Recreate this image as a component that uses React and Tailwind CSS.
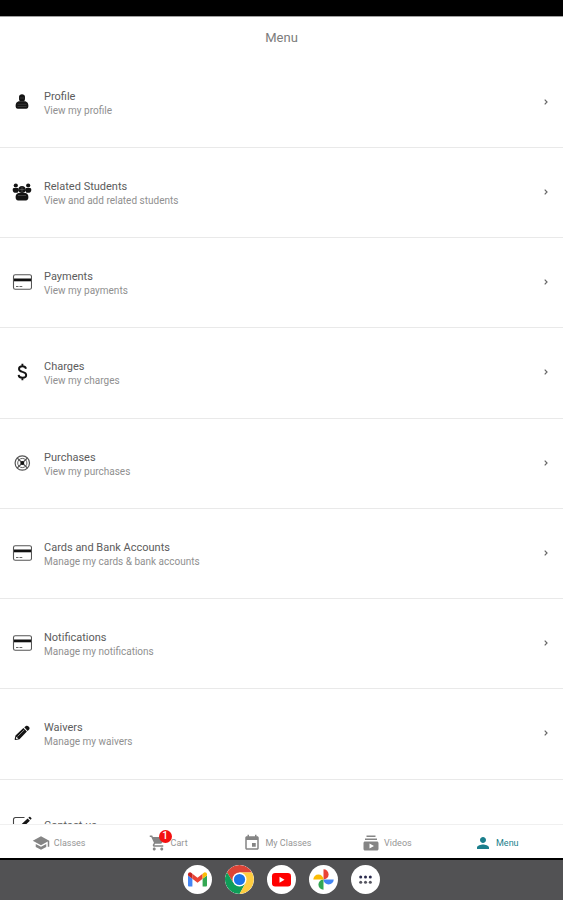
import React from "react";

function PersonIcon() {
  return (
    <svg viewBox="0 0 20 20" className="size-5" aria-hidden="true">
      <path fill="#141414" d="M7 5C7 3.400 8.300 2.300 10 2.300s3 1.100 3 2.700v2c0 1-.4 1.800-1 2.400H8C7.400 8.800 7 8 7 7z" />
      <path fill="#141414" d="M6.600 9.300h6.800c1.900.6 3 2.200 3 4.500 0 1.900-.7 2.900-2.200 2.900H5.800c-1.500 0-2.200-1-2.200-2.900 0-2.300 1.100-3.900 3-4.500z" />
      <path stroke="#666" strokeWidth=".4" d="M5.500 12.300h9M5.500 14.500h9M7.500 6h5" />
    </svg>
  );
}

function GroupIcon() {
  return (
    <svg viewBox="0 0 20 20" className="size-5" aria-hidden="true" fill="#141414">
      <circle cx="3.800" cy="3.500" r="2.100" />
      <circle cx="16.200" cy="3.500" r="2.100" />
      <path d="M1.800 6h4.400l.8 2.500-1.500 2.300H2.800C1.500 10.600.7 9.300.7 7.700.7 6.700 1.100 6.200 1.800 6zM18.200 6h-4.400l-.8 2.500 1.500 2.300h2.700c1.300-.2 2.100-1.500 2.100-3.100 0-1-.4-1.500-1.100-1.700z" />
      <circle cx="10" cy="7.500" r="3.600" />
      <path d="M6.500 11h7c1.700.3 2.900 1.800 2.900 4 0 2.300-.9 3.500-2.500 3.500H6.100c-1.600 0-2.500-1.200-2.500-3.500 0-2.200 1.200-3.700 2.900-4z" />
      <path stroke="#888" strokeWidth=".4" d="M7.500 7.500h5M10 5v5M6 13.500h8" />
    </svg>
  );
}

function CardIcon() {
  return (
    <svg viewBox="0 0 20 20" className="size-5" aria-hidden="true">
      <rect x="1.500" y="2.800" width="18" height="14.400" rx="1.800" fill="#fff" stroke="#555" strokeWidth="1.100" />
      <path fill="#111" d="M2 6.500h17v2.800H2z" />
      <path stroke="#666" strokeWidth="1" d="M4 14.500h2.500M7.500 14.500h2.800" />
    </svg>
  );
}

function DollarIcon() {
  return (
    <svg viewBox="0 0 20 20" className="size-5" aria-hidden="true">
      <path fill="none" stroke="#141414" strokeWidth="1.900" d="M14 6.700c-.4-1.700-1.700-2.500-3.600-2.500S7 5.200 7 6.900c0 1.900 1.700 2.400 3.500 2.900 2 .5 3.700 1.200 3.700 3.200 0 1.800-1.500 2.800-3.700 2.800s-3.700-1-3.900-3M10.400 1.800v2.600M10.400 15.600v2.700" />
    </svg>
  );
}

function WheelIcon() {
  return (
    <svg viewBox="0 0 20 20" className="size-5" aria-hidden="true" fill="none" stroke="#555">
      <circle cx="10.300" cy="10" r="7.200" strokeWidth="1.200" />
      <circle cx="10.300" cy="10" r="4.600" strokeWidth=".9" />
      <path strokeWidth="1.100" d="M5.200 5l10.200 10M15.400 5L5.200 15" />
      <circle cx="10.300" cy="10" r="2" fill="#111" stroke="none" />
    </svg>
  );
}

function PencilIcon() {
  return (
    <svg viewBox="0 0 20 20" className="size-5" aria-hidden="true" fill="#141414">
      <path d="M12.300 4.200l1.600-1.200c.8-.5 1.800-.4 2.400.2l.9 1c.6.700.5 1.500-.1 2.200l-1.500 1.500zM11.400 5l3.500 3.600-7.400 7.600-4.200.9-.7-.7.9-4z" />
      <path fill="none" stroke="#bbb" strokeWidth=".7" d="M5.500 13.500l6.800-6.700" />
      <path fill="#fff" d="M4.300 13.700l2 1.900-1.800.3-.6-.5z" />
    </svg>
  );
}

function ComposeIcon() {
  return (
    <svg viewBox="0 0 20 20" className="size-5" aria-hidden="true">
      <path fill="none" stroke="#444" strokeWidth="1.100" d="M12.500 3.500H3.600C2.200 3.500 1.500 4.200 1.500 5.600v8.800c0 1.400.7 2.100 2.100 2.100h9.800c1.400 0 2.100-.7 2.100-2.100v-4" />
      <path fill="#141414" d="M15.600 4.500l2.300 2.200-6.300 6-3.300.9 1-3.200zM16.300 3.800l1-.9c.4-.3.700-.3 1 0l1 1c.3.3.3.700 0 1l-.8.900z" />
    </svg>
  );
}

function ClassesIcon() {
  return (
    <svg viewBox="0 0 24 24" className="size-[18px]" aria-hidden="true" fill="currentColor">
      <path d="M5 13.180v4L12 21l7-3.820v-4L12 17l-7-3.820zM12 3L1 9l11 6 9-4.910V17h2V9L12 3z" />
    </svg>
  );
}

function CartIcon() {
  return (
    <svg viewBox="0 0 24 24" className="size-[18px]" aria-hidden="true" fill="currentColor">
      <path d="M7 18c-1.100 0-1.990.9-1.990 2S5.900 22 7 22s2-.9 2-2-.9-2-2-2zM1 2v2h2l3.600 7.590-1.350 2.450c-.16.28-.25.61-.25.960 0 1.100.9 2 2 2h12v-2H7.420c-.14 0-.25-.11-.25-.25l.03-.12.900-1.630h7.450c.75 0 1.410-.41 1.750-1.030l3.580-6.490A1 1 0 0 0 20 4H5.210l-.94-2H1zm16 16c-1.100 0-1.990.9-1.990 2s.89 2 1.990 2 2-.9 2-2-.9-2-2-2z" />
    </svg>
  );
}

function CalendarIcon() {
  return (
    <svg viewBox="0 0 24 24" className="size-[18px]" aria-hidden="true" fill="currentColor">
      <path d="M17 12h-5v5h5v-5zM16 1v2H8V1H6v2H5c-1.110 0-1.990.9-1.990 2L3 19c0 1.100.89 2 2 2h14c1.100 0 2-.9 2-2V5c0-1.100-.9-2-2-2h-1V1h-2zm3 18H5V8h14v11z" />
    </svg>
  );
}

function VideosIcon() {
  return (
    <svg viewBox="0 0 24 24" className="size-[18px]" aria-hidden="true" fill="currentColor">
      <path d="M20 8H4V6h16v2zm-2-6H6v2h12V2zm4 10v8c0 1.100-.9 2-2 2H4c-1.100 0-2-.9-2-2v-8c0-1.100.9-2 2-2h16c1.100 0 2 .9 2 2zm-6 4l-6-3.270v6.530L16 16z" />
    </svg>
  );
}

function AccountIcon() {
  return (
    <svg viewBox="0 0 24 24" className="size-[18px]" aria-hidden="true" fill="currentColor">
      <path d="M12 12c2.210 0 4-1.790 4-4s-1.790-4-4-4-4 1.790-4 4 1.790 4 4 4zm0 2c-2.670 0-8 1.340-8 4v2h16v-2c0-2.660-5.330-4-8-4z" />
    </svg>
  );
}

function GmailIcon() {
  return (
    <svg viewBox="0 0 29 29" className="size-full" aria-hidden="true">
      <path fill="#4285f4" d="M5 10.500l4.400 3.300v7.700H6.300c-.8 0-1.300-.5-1.300-1.300z" />
      <path fill="#34a853" d="M24 10.500l-4.400 3.300v7.700h3.100c.8 0 1.300-.5 1.300-1.300z" />
      <path fill="#ea4335" d="M9.400 8.800l5.100 3.900 5.100-3.900v5l-5.100 3.900-5.100-3.900z" />
      <path fill="#c5221f" d="M5 9.500C5 7.600 7.100 6.700 8.500 7.900l.9.900v5L5 10.500z" />
      <path fill="#fbbc04" d="M24 9.500c0-1.900-2.100-2.800-3.500-1.600l-.9.900v5l4.400-3.300z" />
    </svg>
  );
}

function ChromeIcon() {
  return (
    <svg viewBox="0 0 29 29" className="size-full" aria-hidden="true">
      <path fill="#db4437" d="M1.940 7.250A14.500 14.500 0 0 1 27.060 7.500H14.500v7L8.440 18z" />
      <path fill="#0f9d58" d="M1.940 7.250A14.500 14.500 0 0 0 14.500 29L20.560 18l-6.060-3.500-6.060 3.500z" />
      <path fill="#ffcd40" d="M27.060 7.500A14.500 14.500 0 0 1 14.500 29L20.560 18 14.500 7.500z" />
      <circle cx="14.500" cy="14.500" r="7" fill="#fff" />
      <circle cx="14.500" cy="14.500" r="5.600" fill="#1a73e8" />
    </svg>
  );
}

function YouTubeIcon() {
  return (
    <svg viewBox="0 0 29 29" className="size-full" aria-hidden="true">
      <rect x="5" y="8" width="19" height="13.500" rx="3.200" fill="#f00" />
      <path fill="#fff" d="M12.500 11.800v6l5-3z" />
    </svg>
  );
}

function PhotosIcon() {
  return (
    <svg viewBox="0 0 29 29" className="size-full" aria-hidden="true">
      <path fill="#ea4335" d="M14.500 4.300a5.100 5.100 0 0 1 0 10.200z" />
      <path fill="#4285f4" d="M24.700 14.500a5.100 5.100 0 0 1-10.200 0z" />
      <path fill="#34a853" d="M14.500 24.700a5.100 5.100 0 0 1 0-10.200z" />
      <path fill="#fbbc04" d="M4.300 14.500a5.100 5.100 0 0 1 10.200 0z" />
    </svg>
  );
}

function AppsIcon() {
  return (
    <svg viewBox="0 0 29 29" className="size-full" aria-hidden="true" fill="#2b2b4d">
      <circle cx="9.700" cy="12" r="1.500" />
      <circle cx="14.500" cy="12" r="1.500" />
      <circle cx="19.300" cy="12" r="1.500" />
      <circle cx="9.700" cy="17.300" r="1.500" fill="#555560" />
      <circle cx="14.500" cy="17.300" r="1.500" fill="#555560" />
      <circle cx="19.300" cy="17.300" r="1.500" fill="#555560" />
    </svg>
  );
}

const items = [
  { title: "Profile", detail: "View my profile", Icon: PersonIcon },
  { title: "Related Students", detail: "View and add related students", Icon: GroupIcon },
  { title: "Payments", detail: "View my payments", Icon: CardIcon },
  { title: "Charges", detail: "View my charges", Icon: DollarIcon },
  { title: "Purchases", detail: "View my purchases", Icon: WheelIcon },
  { title: "Cards and Bank Accounts", detail: "Manage my cards & bank accounts", Icon: CardIcon },
  { title: "Notifications", detail: "Manage my notifications", Icon: CardIcon },
  { title: "Waivers", detail: "Manage my waivers", Icon: PencilIcon },
  { title: "Contact us", Icon: ComposeIcon },
];

const tabs = [
  { label: "Classes", Icon: ClassesIcon },
  { label: "Cart", Icon: CartIcon, badge: 1 },
  { label: "My Classes", Icon: CalendarIcon },
  { label: "Videos", Icon: VideosIcon },
  { label: "Menu", Icon: AccountIcon, active: true },
];

const dock = [
  { name: "Gmail", Icon: GmailIcon },
  { name: "Chrome", Icon: ChromeIcon },
  { name: "YouTube", Icon: YouTubeIcon },
  { name: "Photos", Icon: PhotosIcon },
  { name: "All apps", Icon: AppsIcon },
];

function MenuRow({ item }) {
  const { title, detail, Icon } = item;
  return (
    <li className="h-[90px] shrink-0 border-b border-[#e9e9e9] nth-[4n]:h-[91px]">
      <a href="#" className="flex h-full items-center pr-[15px] pb-0.5 pl-3">
        <Icon />
        <span className="ml-3 flex flex-1 flex-col pt-1">
          <span className="text-[11px] leading-[14px] text-[#5c5c5c]">{title}</span>
          {detail && <span className="text-[10px] leading-[14px] text-[#909090]">{detail}</span>}
        </span>
        {detail && (
          <svg viewBox="0 0 4 6" className="h-1.5 w-1" aria-hidden="true">
            <path fill="none" stroke="#666" strokeWidth="1.200" d="M.7.7L3 3 .7 5.300" />
          </svg>
        )}
      </a>
    </li>
  );
}

export default function App() {
  return (
    <div className="flex h-screen flex-col bg-white font-[Roboto,sans-serif]">
      <div className="h-4 shrink-0 bg-black" />
      <header className="flex h-[42px] shrink-0 items-center justify-center border-t border-[#a0a0a0]">
        <h1 className="text-[13px] leading-4 text-[#7c7c7c]">Menu</h1>
      </header>
      <main className="min-h-0 flex-1 overflow-hidden">
        <ul className="flex flex-col">
          {items.map((item) => (
            <MenuRow key={item.title} item={item} />
          ))}
        </ul>
      </main>
      <nav className="grid h-[34px] shrink-0 grid-cols-5 border-t border-[#f0f0f0] bg-white pt-0.5 pr-3 pl-1">
        {tabs.map(({ label, Icon, badge, active }) => (
          <button
            key={label}
            type="button"
            className={
              active
                ? "flex items-center justify-center gap-1 text-[#1b7f8c]"
                : "flex items-center justify-center gap-1 text-[#858585]"
            }
          >
            <span className="relative">
              <Icon />
              {badge && (
                <span className="absolute -top-1 left-2.5 flex size-[13px] items-center justify-center rounded-full bg-[#f41010] text-[10px] leading-3 font-medium text-white">
                  {badge}
                </span>
              )}
            </span>
            <span className={active ? "text-[9px] leading-3" : "text-[9px] leading-3 text-[#959595]"}>{label}</span>
          </button>
        ))}
      </nav>
      <footer className="flex h-[42px] shrink-0 items-center justify-center gap-[13px] border-t-2 border-black bg-[#525254] pb-0.5">
        {dock.map(({ name, Icon }) => (
          <button key={name} type="button" aria-label={name} className="size-[29px] overflow-hidden rounded-full bg-white">
            <Icon />
          </button>
        ))}
      </footer>
    </div>
  );
}
